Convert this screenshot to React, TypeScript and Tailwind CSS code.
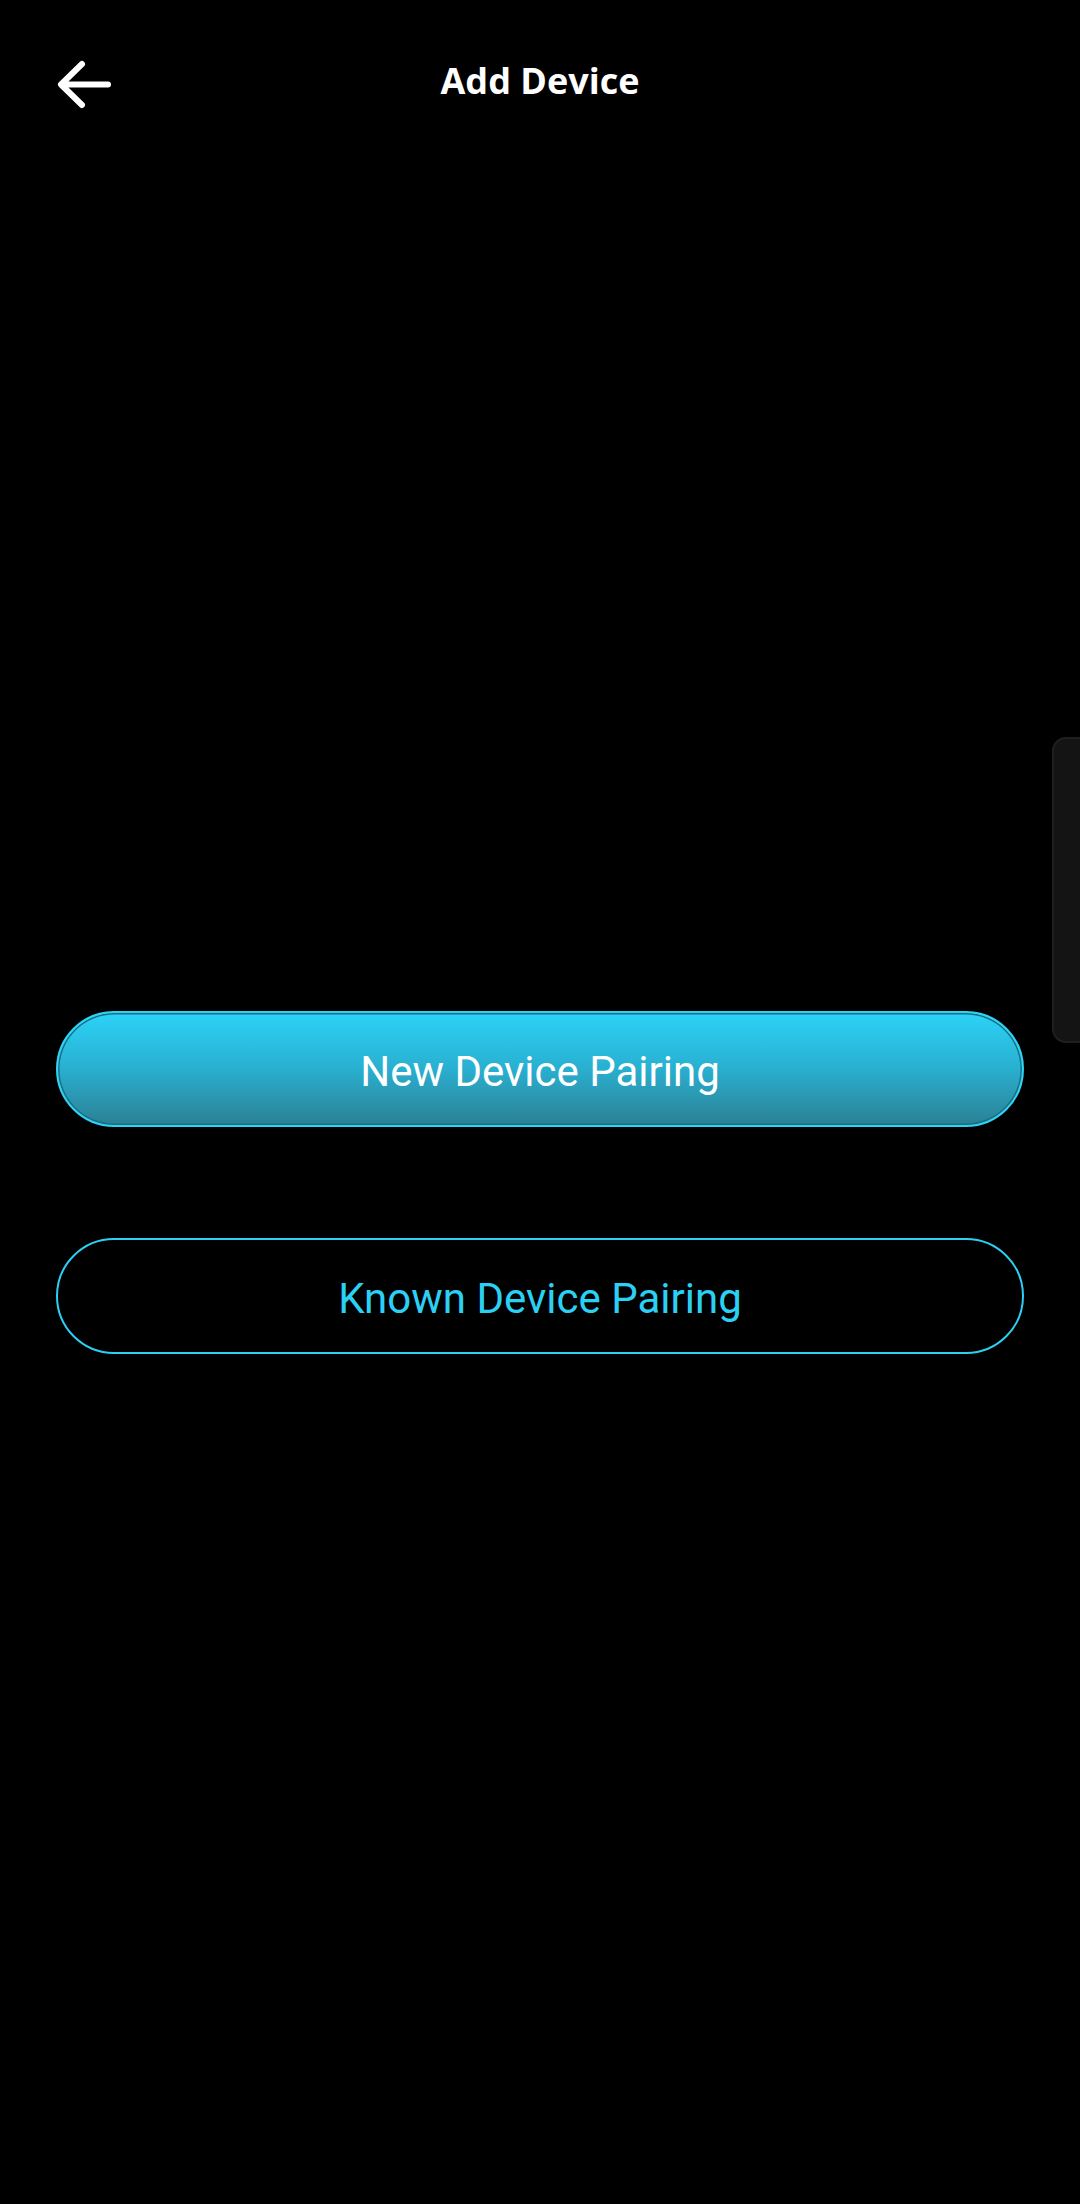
import React from "react";

export default function App() {
  return (
    <div className="relative w-[1080px] h-[2204px] bg-black overflow-hidden" style={{ fontFamily: "Roboto, 'Liberation Sans', sans-serif" }}>
      {/* Header */}
      <div className="relative h-[162px] flex items-center justify-center">
        <button className="absolute left-[53px] top-[56px] w-[64px] h-[58px] flex items-center justify-center">
          <svg width="64" height="58" viewBox="0 0 64 58" fill="none">
            <path d="M55 28.5 H9 M29 8 L8 28.5 L29 49" stroke="#ffffff" strokeWidth="6" strokeLinecap="round" strokeLinejoin="round" />
          </svg>
        </button>
        <h1 className="text-white text-[36px] font-bold leading-none" style={{ fontFamily: "'Open Sans', 'Noto Sans', sans-serif" }}>
          Add Device
        </h1>
      </div>

      {/* Buttons */}
      <div className="px-[56px] pt-[849px] flex flex-col gap-[111px]">
        <button className="h-[116px] w-full pt-[4px] rounded-full border-2 border-[#2cd4f8] bg-gradient-to-b from-[#2bd3f7] via-[#29afd0] to-[#2a8194] shadow-[inset_0_0_0_1.5px_#1c6e82] flex items-center justify-center text-white text-[42px]">
          New Device Pairing
        </button>
        <button className="h-[116px] w-full pt-[4px] rounded-full border-2 border-[#2bd1f4] bg-black flex items-center justify-center text-[#2bd1f4] text-[42px]">
          Known Device Pairing
        </button>
      </div>

      {/* Edge panel handle */}
      <div className="absolute right-[-12px] top-[737px] w-[40px] h-[306px] rounded-[14px] bg-[#141414] border-2 border-[#1f1f1f]" />
    </div>
  );
}
